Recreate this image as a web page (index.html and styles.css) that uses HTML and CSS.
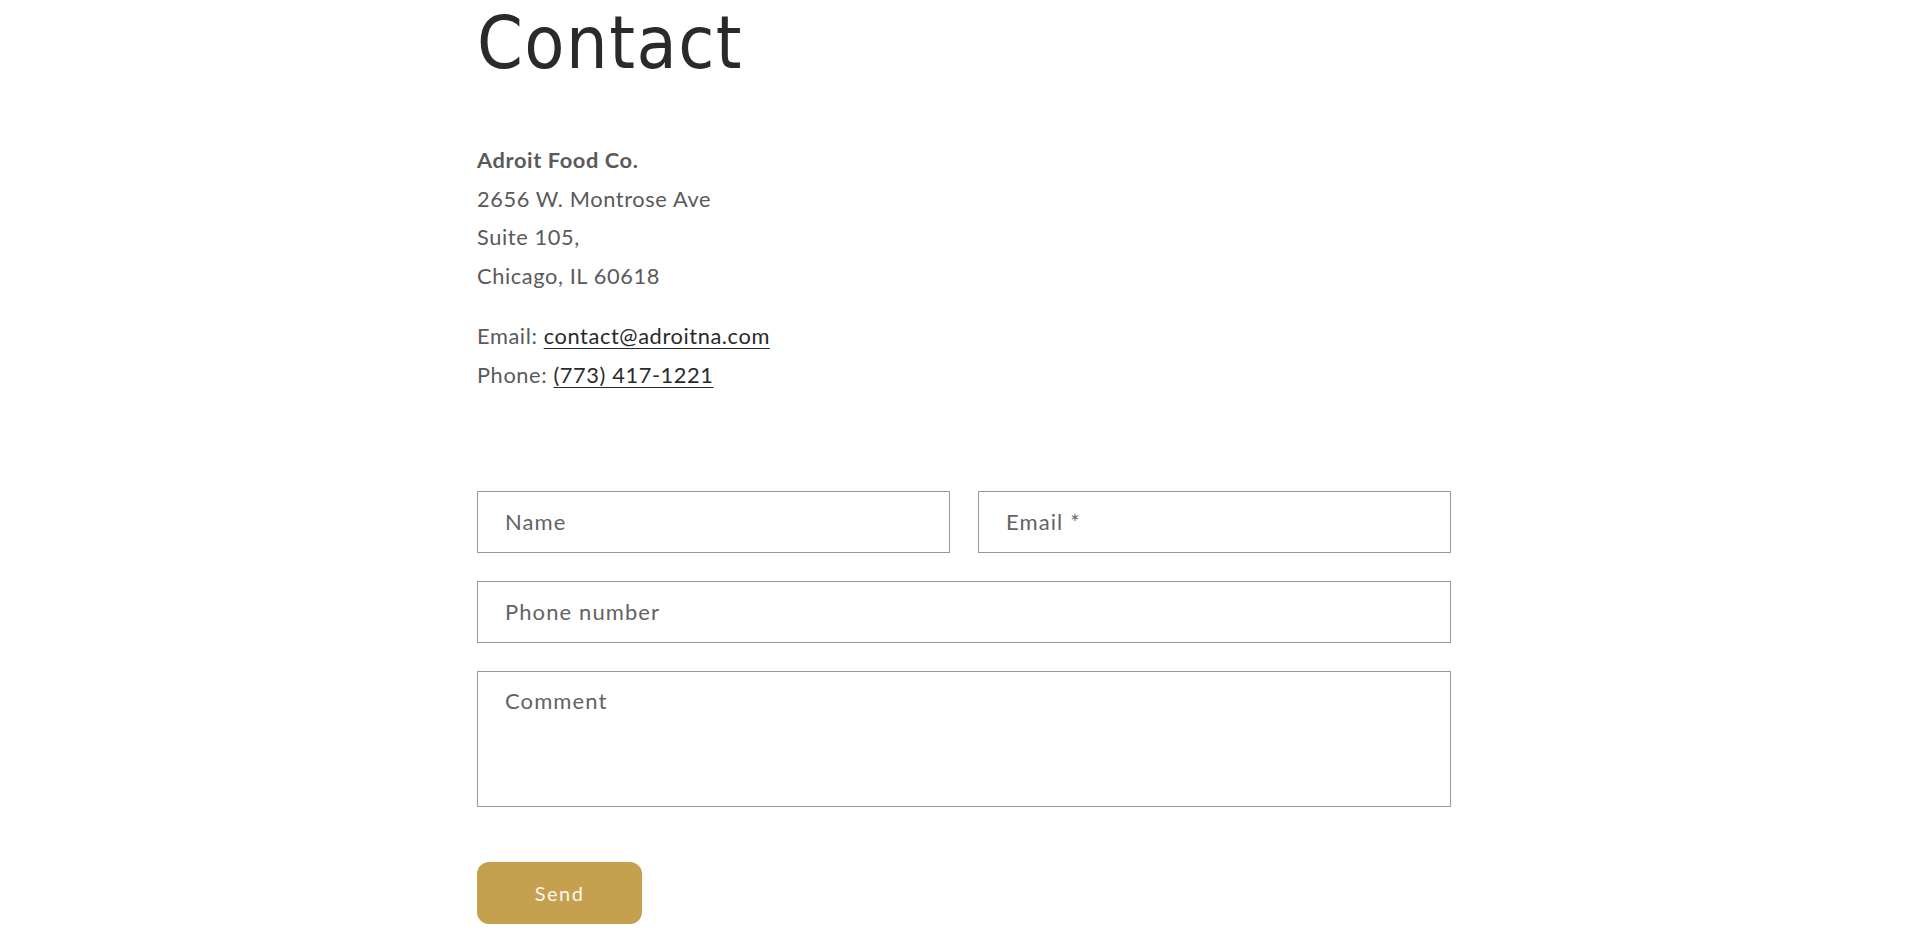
FILE: index.html
```html
<!DOCTYPE html>
<html lang="en">
<head>
<meta charset="utf-8">
<title>Contact</title>
<link rel="stylesheet" href="styles.css">
</head>
<body>
<div class="outer">
  <main class="page">
    <h1 class="title">Contact</h1>
    <div class="info">
      <p class="address"><strong>Adroit Food Co.</strong><br>2656 W. Montrose Ave<br>Suite 105,<br>Chicago, IL 60618</p>
      <p class="contact-lines">Email: <a href="#" class="link">contact@adroitna.com</a><br>Phone: <a href="#" class="link">(773) 417-1221</a></p>
    </div>
    <form class="form">
      <div class="row two">
        <input class="field" type="text" placeholder="Name">
        <input class="field" type="email" placeholder="Email *">
      </div>
      <div class="row">
        <input class="field" type="tel" placeholder="Phone number">
      </div>
      <div class="row">
        <textarea class="field area" placeholder="Comment"></textarea>
      </div>
      <button class="send" type="button">Send</button>
    </form>
  </main>
</div>
</body>
</html>
```
FILE: styles.css
```css
html, body {
  margin: 0;
  padding: 0;
  background: #ffffff;
}
body {
  font-family: Lato, "Noto Sans", sans-serif;
  color: #5a5a5a;
}
.outer {
  padding-left: 8px;
}
.page {
  width: 974px;
  margin: 0 auto;
  padding-top: 3px;
}
.title {
  margin: 0;
  font-family: "DejaVu Sans Condensed", "DejaVu Sans", sans-serif;
  font-weight: normal;
  font-size: 73px;
  line-height: 80px;
  letter-spacing: 1.5px;
  color: #2a2a2a;
}
.info {
  margin-top: 58px;
  font-size: 21.8px;
  line-height: 38.5px;
  letter-spacing: 0.6px;
}
.info p {
  margin: 0;
}
.address strong {
  font-weight: 700;
}
.contact-lines {
  margin-top: 22px !important;
}
.link {
  color: #2a2a2a;
  text-decoration: underline;
  text-underline-offset: 4px;
  text-decoration-thickness: 1px;
}
.form {
  margin-top: 97px;
  display: flex;
  flex-direction: column;
  gap: 28px;
  align-items: flex-start;
}
.row {
  width: 100%;
  display: flex;
}
.row.two {
  display: grid;
  grid-template-columns: 1fr 1fr;
  column-gap: 28px;
}
.field {
  box-sizing: border-box;
  width: 100%;
  height: 62px;
  margin: 0;
  border: 1px solid #999999;
  border-radius: 0;
  padding: 0 27px 2px;
  font-family: Lato, "Noto Sans", sans-serif;
  font-size: 22px;
  letter-spacing: 1.1px;
  color: #2a2a2a;
  background: #fff;
  outline: none;
}
.field::placeholder {
  color: #636363;
  opacity: 1;
}
.area {
  height: 136px;
  padding-top: 15px;
  line-height: 28px;
  resize: none;
  display: block;
}
.send {
  margin-top: 27px;
  width: 165px;
  height: 62px;
  border: none;
  border-radius: 12px;
  background: #c5a04f;
  color: #fbf7ee;
  font-family: Lato, "Noto Sans", sans-serif;
  font-size: 20px;
  letter-spacing: 1.5px;
  padding: 0;
  cursor: pointer;
}
```
